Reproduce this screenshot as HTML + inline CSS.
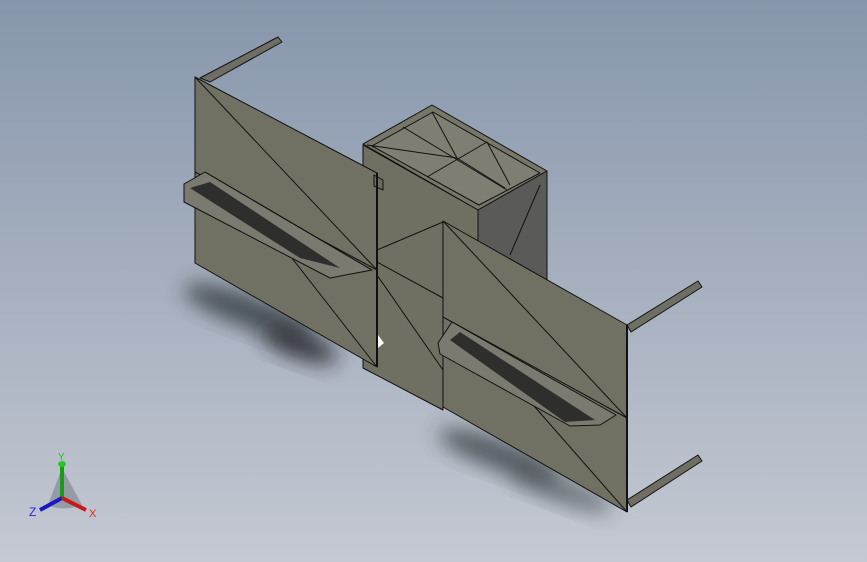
<!DOCTYPE html>
<html><head><meta charset="utf-8"><style>
html,body{margin:0;padding:0;width:867px;height:562px;overflow:hidden}
body{background:linear-gradient(180deg,#8796ac 0%,#a3adbd 45%,#c4c9d2 100%)}
svg{position:absolute;left:0;top:0}
</style></head><body>
<svg width="867" height="562" viewBox="0 0 867 562">
<defs>
<filter id="b" x="-50%" y="-50%" width="200%" height="200%"><feGaussianBlur stdDeviation="10"/></filter>
</defs>
<!-- shadows -->
<ellipse cx="250" cy="312" rx="70" ry="16" transform="rotate(20 250 312)" fill="#2c3036" opacity="0.75" filter="url(#b)"/>
<ellipse cx="300" cy="345" rx="40" ry="14" transform="rotate(20 300 345)" fill="#202328" opacity="0.8" filter="url(#b)"/>
<ellipse cx="500" cy="455" rx="65" ry="15" transform="rotate(20 500 455)" fill="#2c3036" opacity="0.7" filter="url(#b)"/>
<ellipse cx="560" cy="490" rx="55" ry="12" transform="rotate(20 560 490)" fill="#2c3036" opacity="0.55" filter="url(#b)"/>
<g stroke="#111" stroke-width="1" stroke-linejoin="round">
<!-- left arm -->
<polygon points="200,78 278,37 282,42 210,82" fill="#6e6e64"/>
<!-- box top -->
<polygon points="363,144 432,105 547,171 478,210" fill="#777769"/>
<polygon points="372,146 433,112 540,173 479,205" fill="#7e7e72"/>
<line x1="403" y1="127" x2="507" y2="190"/><line x1="427" y1="177" x2="487" y2="142"/><line x1="367" y1="145" x2="457" y2="158"/><line x1="432" y1="112" x2="457" y2="158"/><line x1="457" y1="158" x2="505" y2="188"/><line x1="487" y1="142" x2="510" y2="185"/>
<!-- box right face -->
<polygon points="478,210 547,171 547,280 478,280" fill="#5a5a58"/>
<line x1="510" y1="255" x2="540" y2="185"/>
<!-- center column -->
<polygon points="363,145 478,210 478,300 443,330 443,410 363,368" fill="#707062"/>
<line x1="377" y1="250" x2="443" y2="222"/><line x1="377" y1="262" x2="443" y2="298"/><line x1="377" y1="275" x2="443" y2="370"/>
<!-- left panel -->
<polygon points="195,77 377,173 377,367 195,263" fill="#717163"/>
<line x1="195" y1="77" x2="377" y2="270"/><line x1="195" y1="172" x2="377" y2="270"/><line x1="270" y1="230" x2="377" y2="367"/>
<polygon points="374,175 383,180 383,190 374,186" fill="#6a6a60"/>
<!-- left vane -->
<polygon points="184,184 205,172 372,270 330,278 184,202" fill="#7a7a70"/>
<polygon points="190,188 210,182 340,268 300,258" fill="#2e2e2c" stroke="none"/>
<line x1="205" y1="172" x2="372" y2="270"/>
<!-- right panel -->
<polygon points="443,221 627,325 627,512 443,407" fill="#717163"/>
<line x1="443" y1="221" x2="627" y2="418"/><line x1="443" y1="317" x2="627" y2="418"/><line x1="520" y1="390" x2="627" y2="512"/>
<!-- right vane -->
<polygon points="438,343 452,322 616,415 600,425 570,426 440,354" fill="#7a7a70"/>
<polygon points="450,340 460,332 595,420 565,422" fill="#2e2e2c" stroke="none"/>
<!-- right arms -->
<polygon points="627,325 698,281 702,287 631,332" fill="#6e6e64"/>
<polygon points="627,500 698,455 702,461 631,507" fill="#6e6e64"/>
<line x1="627" y1="325" x2="627" y2="512" stroke-width="2"/>
<line x1="377" y1="173" x2="377" y2="367" stroke-width="2"/>
</g>
<polygon points="378,335 384,343 378,348" fill="#fff"/>
<!-- triad -->
<g>
<path d="M62 468 L48 505 Q62 512 82 505 Z" fill="#6e737c" opacity="0.5"/>
<line x1="62" y1="498" x2="62" y2="466" stroke="#1a9a1a" stroke-width="4"/>
<ellipse cx="62" cy="464" rx="4" ry="3" fill="#2c2"/>
<line x1="62" y1="498" x2="40" y2="510" stroke="#1818c8" stroke-width="4"/>
<line x1="62" y1="498" x2="86" y2="510" stroke="#c81818" stroke-width="4"/>
<text x="58" y="460" font-family="Liberation Sans,sans-serif" font-size="10" fill="#1c1">Y</text>
<text x="29" y="516" font-family="Liberation Sans,sans-serif" font-size="12" fill="#22e">Z</text>
<text x="89" y="517" font-family="Liberation Sans,sans-serif" font-size="11" fill="#e22">X</text>
</g>
</svg>
</body></html>
